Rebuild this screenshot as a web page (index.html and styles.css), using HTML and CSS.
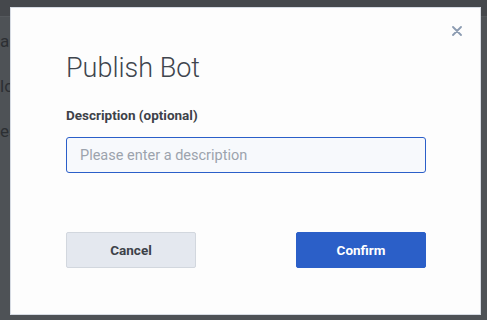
FILE: index.html
```html
<!DOCTYPE html>
<html lang="en">
<head>
    <meta charset="UTF-8">
    <meta name="viewport" content="width=device-width, initial-scale=1.0">
    <title>Publish Bot</title>
    <link rel="stylesheet" href="styles.css">
</head>
<body>
    <div class="topbar"></div>
    <div class="page">
        <p class="row">ard</p>
        <p class="row">lows</p>
        <p class="row">es</p>
    </div>

    <div class="modal">
        <button class="close" type="button" aria-label="Close">
            <svg width="10" height="10" viewBox="0 0 10 10">
                <path d="M1 1L9 9M9 1L1 9" stroke="#8b9bb1" stroke-width="1.8" stroke-linecap="round"/>
            </svg>
        </button>
        <h1>Publish Bot</h1>
        <form class="publish-form" action="javascript:void(0);">
            <label for="description">Description (optional)</label>
            <input type="text" id="description" placeholder="Please enter a description" autofocus>
            <div class="actions">
                <button type="button" class="btn btn-cancel">Cancel</button>
                <button type="submit" class="btn btn-confirm">Confirm</button>
            </div>
        </form>
    </div>
</body>
</html>
```

FILE: styles.css
```css
body {
    margin: 0;
    background-color: #4e5256;
    font-family: Roboto, "Liberation Sans", sans-serif;
    height: 320px;
    overflow: hidden;
}

.topbar {
    height: 16px;
    background-color: #45484c;
    border-bottom: 1px solid #55595d;
}

.page {
    padding-top: 14px;
}

.row {
    margin: 0 0 24px 0;
    font-size: 17px;
    line-height: 21px;
    color: #2c2f33;
}

.modal {
    position: absolute;
    left: 10px;
    top: 7px;
    width: 360px;
    height: 306px;
    padding: 0 54px 0 55px;
    background-color: #fdfdfd;
    border: 1px solid #d6dbe3;
    box-sizing: content-box;
}

.close {
    position: absolute;
    top: 18px;
    right: 18px;
    padding: 0;
    border: none;
    background: none;
    line-height: 0;
    cursor: pointer;
}

.modal h1 {
    margin: 42px 0 0;
    font-size: 27px;
    font-weight: 300;
    line-height: 36px;
    color: #3f454d;
}

.publish-form label {
    display: block;
    margin-top: 21px;
    font-size: 13.5px;
    font-weight: bold;
    color: #3d4249;
}

.publish-form input {
    display: block;
    width: 360px;
    height: 36px;
    margin-top: 14px;
    padding: 0 13px;
    box-sizing: border-box;
    border: 1px solid #2b5fc9;
    border-radius: 3px;
    background-color: #f7f9fc;
    font-family: inherit;
    font-size: 14.5px;
    color: #3d4249;
    caret-color: #3d4249;
    outline: none;
}

.publish-form input::placeholder {
    color: #9ca3ad;
}

.actions {
    display: flex;
    justify-content: space-between;
    margin-top: 59px;
}

.btn {
    width: 130px;
    height: 36px;
    border-radius: 2px;
    font-family: inherit;
    font-size: 13.5px;
    font-weight: bold;
    cursor: pointer;
}

.btn-cancel {
    background-color: #e4e8ef;
    border: 1px solid #d2d7de;
    color: #3d4249;
}

.btn-confirm {
    background-color: #2b5fc8;
    border: 1px solid #2b5fc8;
    color: #fff;
}
```
